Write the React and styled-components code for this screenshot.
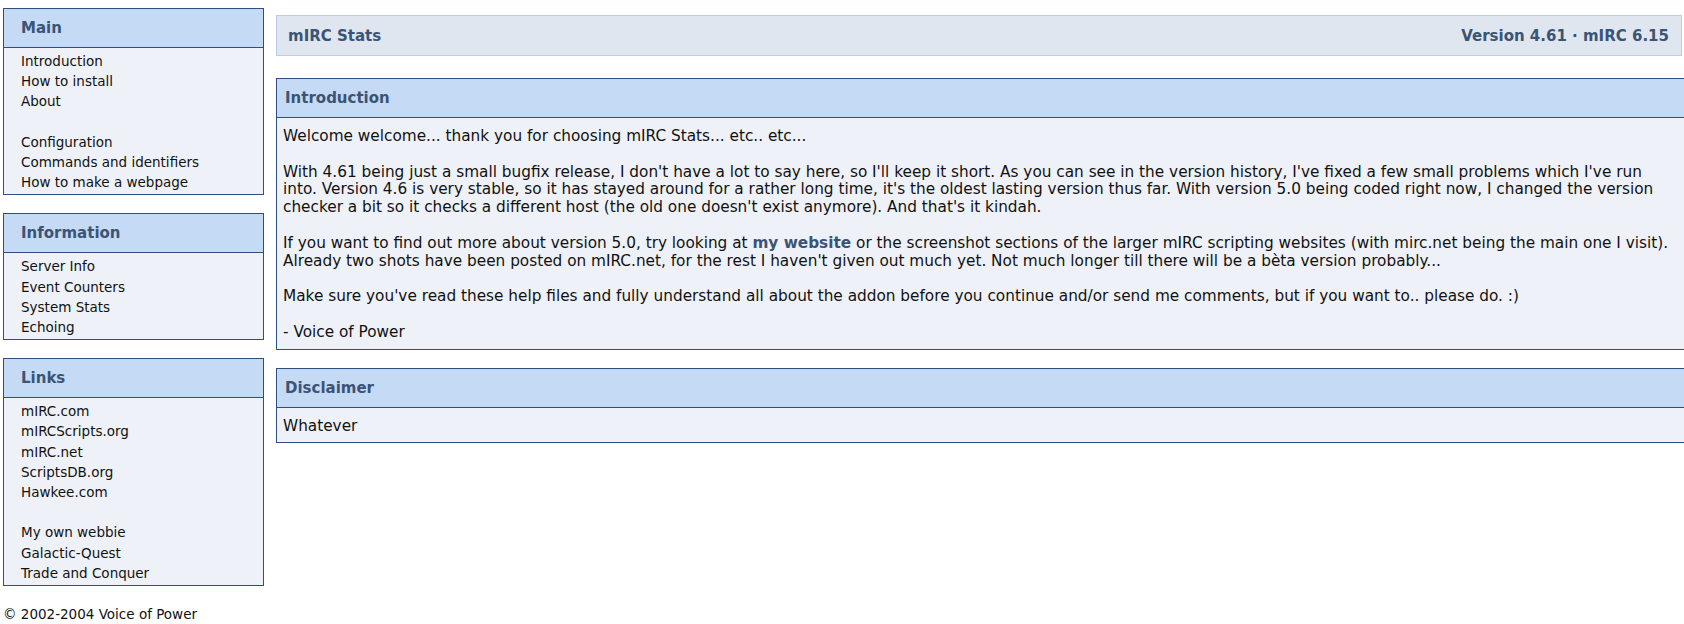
import React from "react";
import styled, { createGlobalStyle } from "styled-components";

const GlobalStyle = createGlobalStyle`
  html, body {
    margin: 0;
    padding: 0;
    background: #ffffff;
    overflow: hidden;
  }
  body {
    font-family: "DejaVu Sans", Verdana, sans-serif;
    font-size: 13.5px;
    color: #111111;
  }
`;

const Page = styled.div`
  display: grid;
  grid-template-columns: 261px 1fr;
  column-gap: 12px;
  padding: 8px 2px 0 3px;
  align-items: start;
`;

const Sidebar = styled.div`
  display: flex;
  flex-direction: column;
  gap: 18px;
`;

const Main = styled.div`
  display: flex;
  flex-direction: column;
  padding-top: 7px;
  min-width: 0;
`;

const Box = styled.div`
  border: 1px solid #2f4f82;
  background: #eef1f7;
  width: ${(p) => (p.$wide ? "calc(100% + 12px)" : "auto")};
  box-sizing: border-box;
  margin-bottom: ${(p) => (p.$wide ? "18px" : "0")};
`;

const BoxHead = styled.div`
  background: #c5daf5;
  border-bottom: 1px solid #2f4f82;
  height: 38px;
  display: flex;
  align-items: center;
  padding-left: ${(p) => (p.$side ? "17px" : "8px")};
  font-weight: bold;
  font-size: 15px;
  color: #3b5476;
`;

const NavList = styled.div`
  padding: 3px 17px 2px;
  line-height: 20.2px;
`;

const NavLink = styled.a`
  display: block;
  color: #111111;
  text-decoration: none;
`;

const Spacer = styled.div`
  height: 20.2px;
`;

const Footer = styled.div`
  margin-top: 19px;
  line-height: 18px;
`;

const TopBar = styled.div`
  display: flex;
  justify-content: space-between;
  align-items: center;
  height: 39px;
  padding: 0 12px 0 11px;
  background: #dfe6f0;
  border: 1px solid #bccdea;
  font-weight: bold;
  font-size: 15px;
  color: #3b5476;
  margin-bottom: 22px;
`;

const BoxBody = styled.div`
  padding: 10px 16px 7px 6px;
  font-size: 15.3px;
  line-height: 17.8px;
`;

const Para = styled.p`
  margin: 0 0 17.8px;
  &:last-child {
    margin-bottom: 0;
  }
`;

const Strong = styled.a`
  font-weight: bold;
  color: #3b5476;
  text-decoration: none;
`;

const navGroups = [
  {
    title: "Main",
    items: [["Introduction", "How to install", "About"], ["Configuration", "Commands and identifiers", "How to make a webpage"]],
  },
  {
    title: "Information",
    items: [["Server Info", "Event Counters", "System Stats", "Echoing"]],
  },
  {
    title: "Links",
    items: [
      ["mIRC.com", "mIRCScripts.org", "mIRC.net", "ScriptsDB.org", "Hawkee.com"],
      ["My own webbie", "Galactic-Quest", "Trade and Conquer"],
    ],
  },
];

export default function App() {
  return (
    <>
      <GlobalStyle />
      <Page>
        <div>
          <Sidebar>
            {navGroups.map((g) => (
              <Box key={g.title}>
                <BoxHead $side>{g.title}</BoxHead>
                <NavList>
                  {g.items.map((group, i) => (
                    <React.Fragment key={i}>
                      {i > 0 && <Spacer />}
                      {group.map((it) => (
                        <NavLink key={it} href="#">
                          {it}
                        </NavLink>
                      ))}
                    </React.Fragment>
                  ))}
                </NavList>
              </Box>
            ))}
          </Sidebar>
          <Footer>© 2002-2004 Voice of Power</Footer>
        </div>
        <Main>
          <TopBar>
            <span>mIRC Stats</span>
            <span>Version 4.61 · mIRC 6.15</span>
          </TopBar>
          <Box $wide>
            <BoxHead>Introduction</BoxHead>
            <BoxBody>
              <Para>Welcome welcome... thank you for choosing mIRC Stats... etc.. etc...</Para>
              <Para>
                With 4.61 being just a small bugfix release, I don't have a lot to say here, so I'll keep it short. As you
                can see in the version history, I've fixed a few small problems which I've run into. Version 4.6 is very
                stable, so it has stayed around for a rather long time, it's the oldest lasting version thus far. With
                version 5.0 being coded right now, I changed the version checker a bit so it checks a different host (the
                old one doesn't exist anymore). And that's it kindah.
              </Para>
              <Para>
                If you want to find out more about version 5.0, try looking at <Strong href="#">my website</Strong> or the
                screenshot sections of the larger mIRC scripting websites (with mirc.net being the main one I visit).
                Already two shots have been posted on mIRC.net, for the rest I haven't given out much yet. Not much longer
                till there will be a bèta version probably...
              </Para>
              <Para>
                Make sure you've read these help files and fully understand all about the addon before you continue and/or
                send me comments, but if you want to.. please do. :)
              </Para>
              <Para>- Voice of Power</Para>
            </BoxBody>
          </Box>
          <Box $wide>
            <BoxHead>Disclaimer</BoxHead>
            <BoxBody>Whatever</BoxBody>
          </Box>
        </Main>
      </Page>
    </>
  );
}
